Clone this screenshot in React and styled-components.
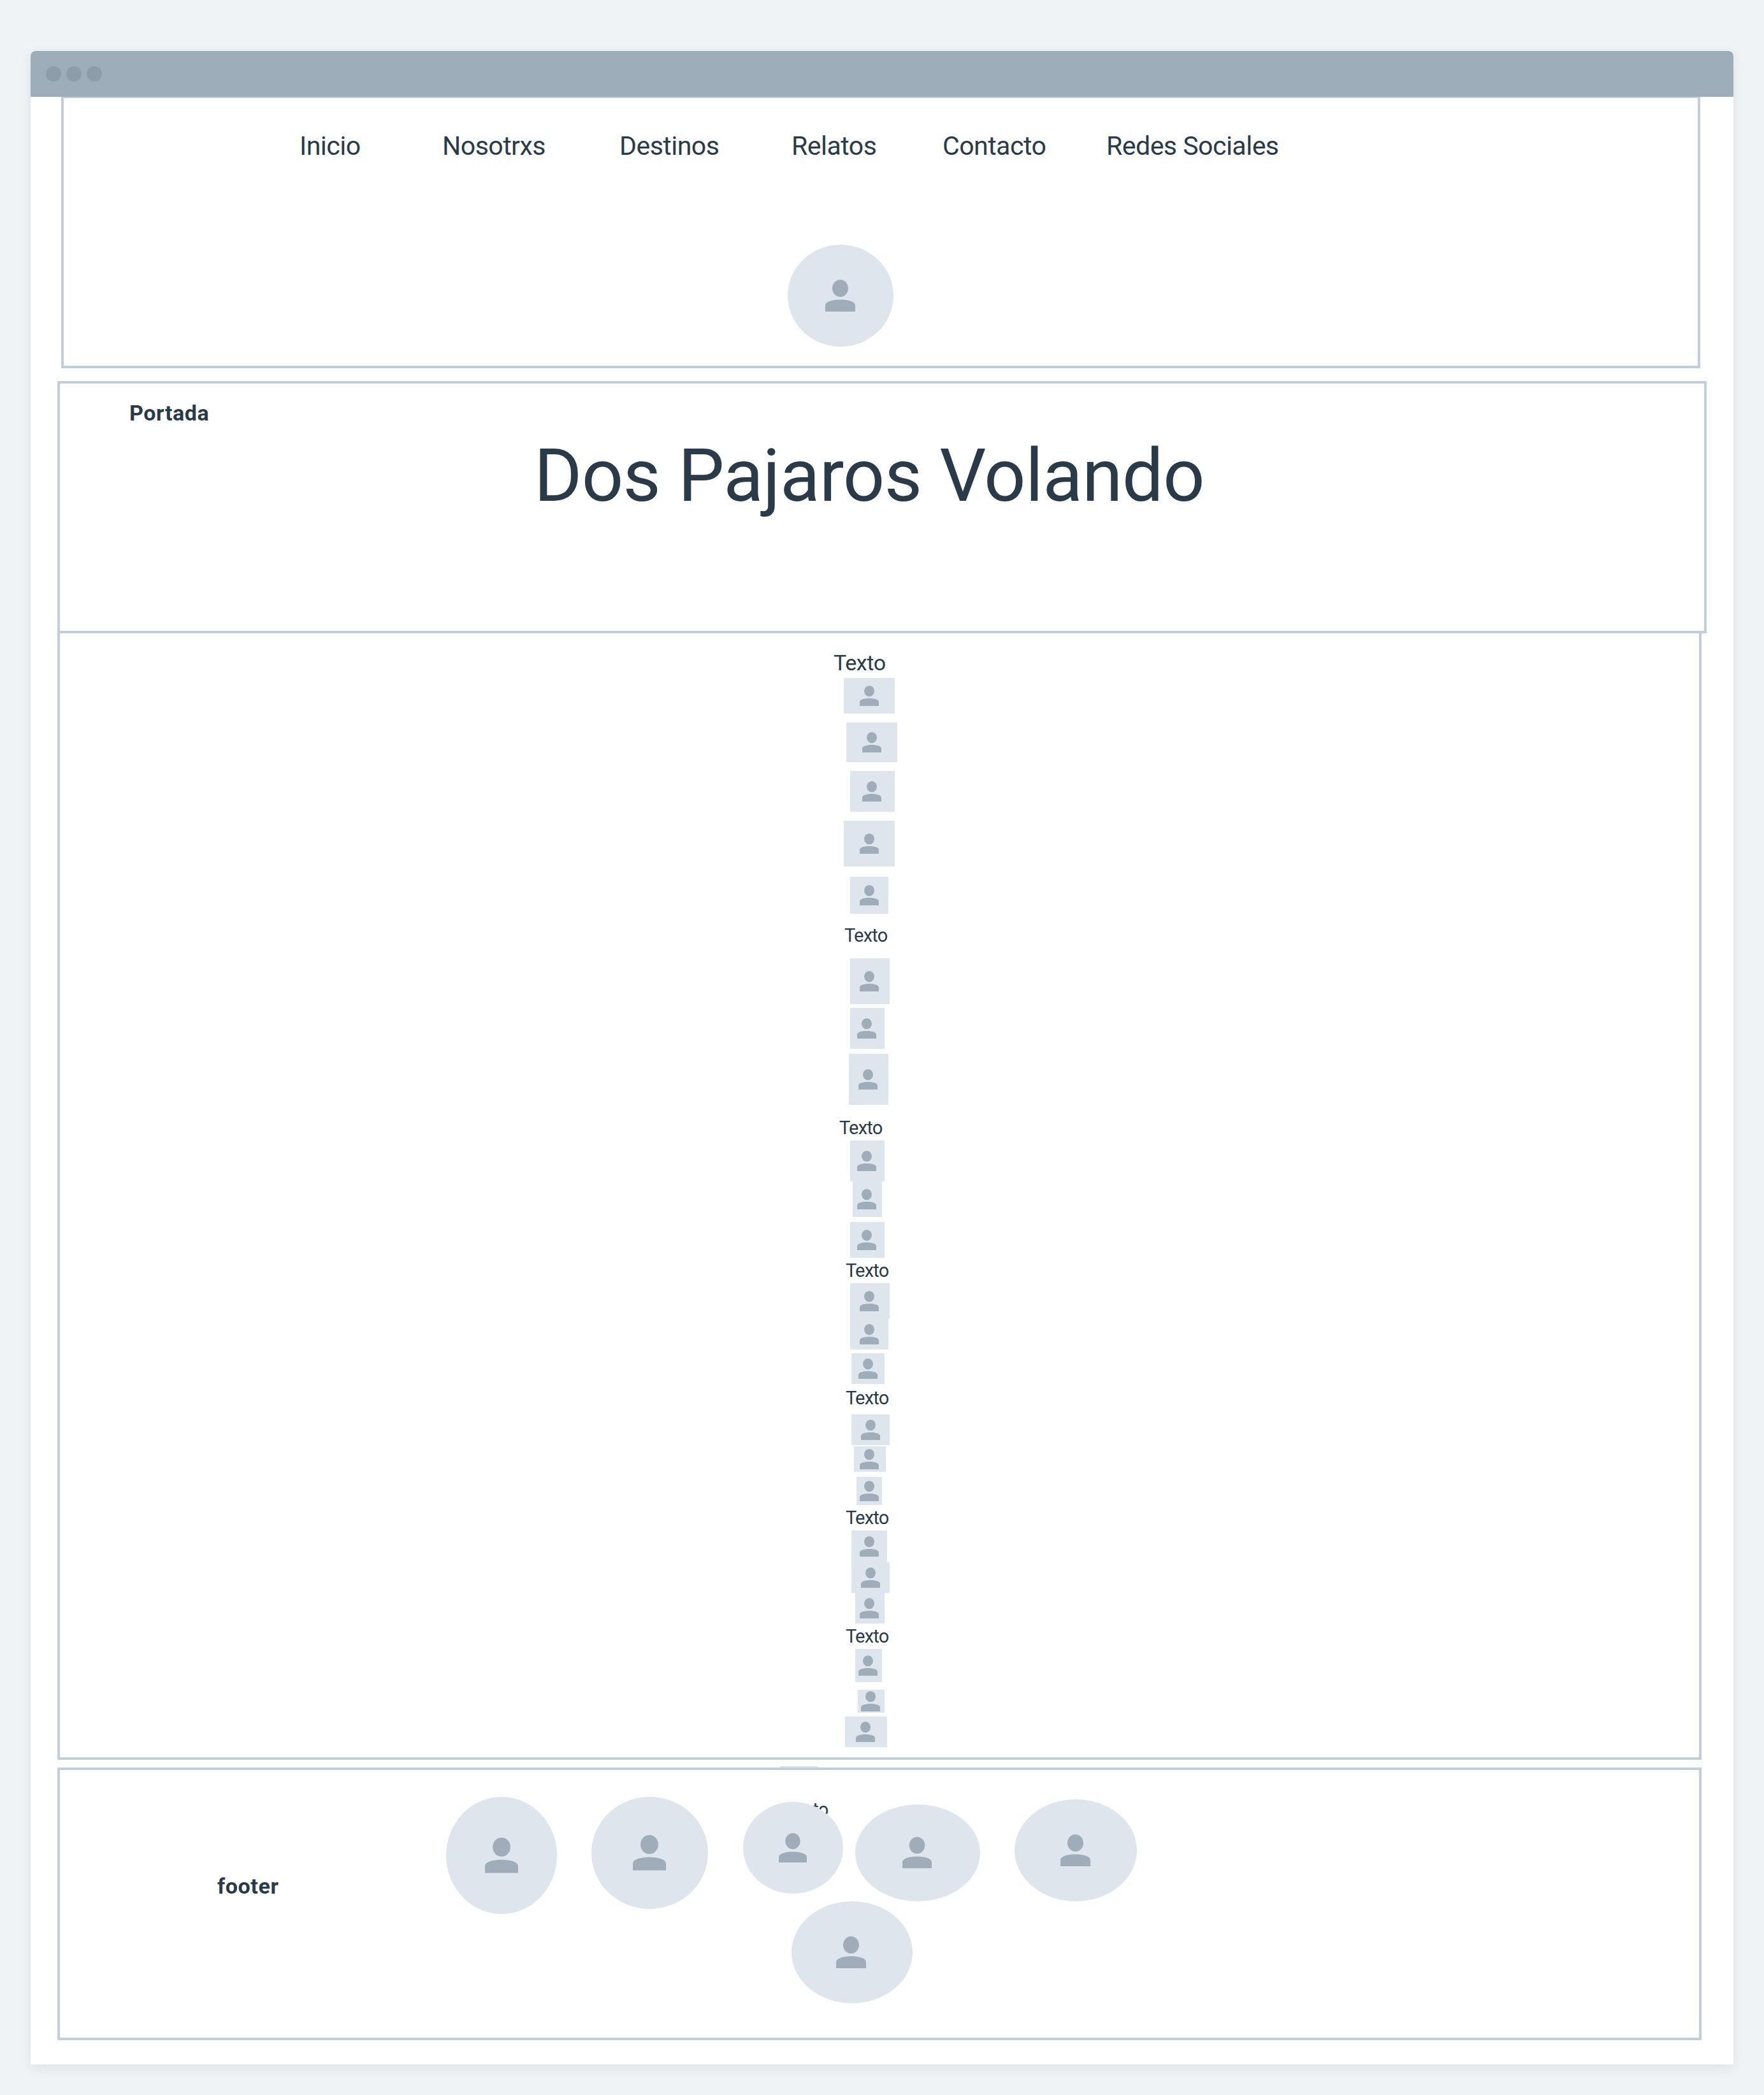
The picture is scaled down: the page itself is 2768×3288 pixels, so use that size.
import React from "react";
import styled, { createGlobalStyle } from "styled-components";

const Global = createGlobalStyle`
  html, body { margin: 0; padding: 0; }
  body { background: #eff3f6; font-family: Roboto, "Liberation Sans", sans-serif; color: #2a3a48; }
  * { box-sizing: border-box; }
`;

const Page = styled.div`
  padding: 80px 48px 48px;
`;
const Win = styled.div`
  width: 2672px;
  height: 3160px;
  background: #fff;
  border-radius: 8px 8px 0 0;
  box-shadow: 0 6px 18px rgba(40, 60, 80, 0.09);
`;
const TitleBar = styled.div`
  position: relative;
  z-index: 2;
  height: 72px;
  background: #9eadba;
  border-radius: 8px 8px 0 0;
  display: flex;
  align-items: center;
  gap: 8px;
  padding-left: 24px;
`;
const Dot = styled.span`
  width: 24px;
  height: 24px;
  border-radius: 50%;
  background: #8d9dac;
`;
const NavBox = styled.header`
  width: 2572px;
  height: 428px;
  margin: -2px 0 0 48px;
  border: 4px solid #c2cfda;
  padding-top: 54px;
`;
const NavRow = styled.nav`
  display: grid;
  grid-template-columns: 224px 278px 270px 237px 257px auto;
  margin-left: 370px;
  height: 42px;
`;
const NavLink = styled.a`
  font-size: 41px;
  line-height: 42px;
  font-weight: 400;
  letter-spacing: -0.5px;
  white-space: nowrap;
`;
const Ellipse = styled.div`
  position: relative;
  z-index: 1;
  flex: none;
  width: ${(p) => p.$w}px;
  height: ${(p) => p.$h}px;
  margin-left: ${(p) => p.$left}px;
  margin-top: ${(p) => p.$top}px;
  padding-right: ${(p) => p.$nudge || 0}px;
  border-radius: 50%;
  background: #dfe5ed;
  display: flex;
  align-items: center;
  justify-content: center;
`;
const Cover = styled.section`
  width: 2588px;
  height: 396px;
  margin: 20px 0 0 42px;
  border: 4px solid #c2cfda;
  position: relative;
  z-index: 1;
`;
const CoverLabel = styled.h2`
  margin: 29px 0 0 109px;
  font-size: 34px;
  line-height: 34px;
  font-weight: 700;
  letter-spacing: 0.6px;
`;
const Title = styled.h1`
  margin: 24px 0 0 744px;
  font-size: 115px;
  line-height: 115px;
  font-weight: 400;
  letter-spacing: -0.72px;
  white-space: nowrap;
`;
const Main = styled.main`
  width: 2580px;
  height: 1772px;
  margin: -4px 0 0 42px;
  border: 4px solid #c2cfda;
  display: flex;
  flex-direction: column;
  align-items: flex-start;
`;
const Picture = styled.div`
  flex: none;
  width: ${(p) => p.$w}px;
  height: ${(p) => p.$h}px;
  margin-left: ${(p) => p.$left}px;
  margin-top: ${(p) => p.$top}px;
  padding-right: ${(p) => (p.$w % 4 === 2 ? 2 : 0)}px;
  background: #dfe5ed;
  display: flex;
  align-items: center;
  justify-content: center;
`;
const Caption = styled.p`
  flex: none;
  margin: ${(p) => p.$top}px 0 0 ${(p) => p.$left}px;
  font-size: ${(p) => p.$size}px;
  line-height: ${(p) => p.$size}px;
  letter-spacing: ${(p) => (p.$size > 30 ? -0.4 : -0.8)}px;
`;
const Footer = styled.footer`
  position: relative;
  z-index: 1;
  width: 2580px;
  height: 428px;
  margin: 12px 0 0 42px;
  border: 4px solid #c2cfda;
  background: #fff;
`;
const AvatarRow = styled.div`
  display: flex;
  align-items: flex-start;
  height: 206px;
`;
const FooterLabel = styled.strong`
  flex: none;
  width: 95px;
  margin: 165px 0 0 247px;
  font-size: 34px;
  line-height: 34px;
  letter-spacing: 0.6px;
`;
const Hidden = styled.p`
  position: absolute;
  left: 1138px;
  top: 48px;
  margin: 0;
  font-size: 29px;
  line-height: 29px;
  letter-spacing: -0.8px;
`;

const Person = ({ w = 30 }) => (
  <svg width={w} height={(w * 32) / 30} viewBox="0 0 30 32" fill="#9fadba">
    <ellipse cx="15" cy="8.6" rx="8" ry="8.6" />
    <path d="M0 32V25.8C0 21.6 8.4 20 15 20s15 1.6 15 5.8V32Z" />
  </svg>
);

const TEXT = (x, capTop, size) => ({ x, y: capTop + 1 - 0.13 * size, h: size, size });
const IMG = (x, y, w, h) => ({ x, y, w, h });

const stack = [
  TEXT(1308, 1026, 34),
  IMG(1324, 1064, 80, 56), IMG(1328, 1134, 80, 62), IMG(1334, 1210, 70, 64), IMG(1324, 1288, 80, 72), IMG(1334, 1376, 60, 58),
  TEXT(1325, 1457, 29),
  IMG(1334, 1504, 62, 72), IMG(1334, 1582, 54, 64), IMG(1332, 1654, 62, 80),
  TEXT(1317, 1759, 29),
  IMG(1334, 1790, 54, 64), IMG(1338, 1854, 46, 56), IMG(1334, 1918, 54, 56),
  TEXT(1327, 1983, 29),
  IMG(1334, 2014, 62, 56), IMG(1334, 2070, 60, 48), IMG(1336, 2124, 52, 48),
  TEXT(1327, 2183, 29),
  IMG(1336, 2220, 60, 48), IMG(1340, 2270, 50, 40), IMG(1344, 2318, 40, 44),
  TEXT(1327, 2371, 29),
  IMG(1336, 2402, 56, 50), IMG(1336, 2452, 60, 48), IMG(1342, 2500, 46, 48),
  TEXT(1327, 2557, 29),
  IMG(1342, 2588, 42, 52), IMG(1346, 2652, 42, 36), IMG(1326, 2694, 66, 48),
  IMG(1224, 2772, 60, 56),
];

const MAIN_LEFT = 94;
const MAIN_TOP = 994;

const flowed = stack.reduce(
  (acc, it) => {
    const top = it.y - acc.bottom;
    acc.items.push({ ...it, left: it.x - MAIN_LEFT, top });
    acc.bottom = it.y + it.h;
    return acc;
  },
  { items: [], bottom: MAIN_TOP }
).items;

const navItems = ["Inicio", "Nosotrxs", "Destinos", "Relatos", "Contacto", "Redes Sociales"];

const firstRow = [
  { w: 174, h: 184, left: 264, top: 42, icon: 52, nudge: 0 },
  { w: 183, h: 176, left: 54, top: 42, icon: 52, nudge: 2 },
  { w: 157, h: 144, left: 55, top: 50, icon: 44, nudge: 2 },
  { w: 196, h: 152, left: 19, top: 54, icon: 46, nudge: 2 },
  { w: 192, h: 160, left: 54, top: 46, icon: 47, nudge: 2 },
];

export default function App() {
  return (
    <>
      <Global />
      <Page>
        <Win>
          <TitleBar>
            <Dot />
            <Dot />
            <Dot />
          </TitleBar>
          <NavBox>
            <NavRow>
              {navItems.map((n) => (
                <NavLink key={n}>{n}</NavLink>
              ))}
            </NavRow>
            <Ellipse $w={166} $h={160} $left={1136} $top={134} $nudge={2}>
              <Person w={47} />
            </Ellipse>
          </NavBox>
          <Cover>
            <CoverLabel>Portada</CoverLabel>
            <Title>Dos Pajaros Volando</Title>
          </Cover>
          <Main>
            {flowed.map((it, i) =>
              it.size ? (
                <Caption key={i} $left={it.left} $top={it.top} $size={it.size}>
                  Texto
                </Caption>
              ) : (
                <Picture key={i} $left={it.left} $top={it.top} $w={it.w} $h={it.h}>
                  <Person />
                </Picture>
              )
            )}
          </Main>
          <Footer>
            <Hidden>Texto</Hidden>
            <AvatarRow>
              <FooterLabel>footer</FooterLabel>
              {firstRow.map((a, i) => (
                <Ellipse key={i} $w={a.w} $h={a.h} $left={a.left} $top={a.top} $nudge={a.nudge}>
                  <Person w={a.icon} />
                </Ellipse>
              ))}
            </AvatarRow>
            <Ellipse $w={190} $h={160} $left={1148} $top={0} $nudge={3}>
              <Person w={47} />
            </Ellipse>
          </Footer>
        </Win>
      </Page>
    </>
  );
}
